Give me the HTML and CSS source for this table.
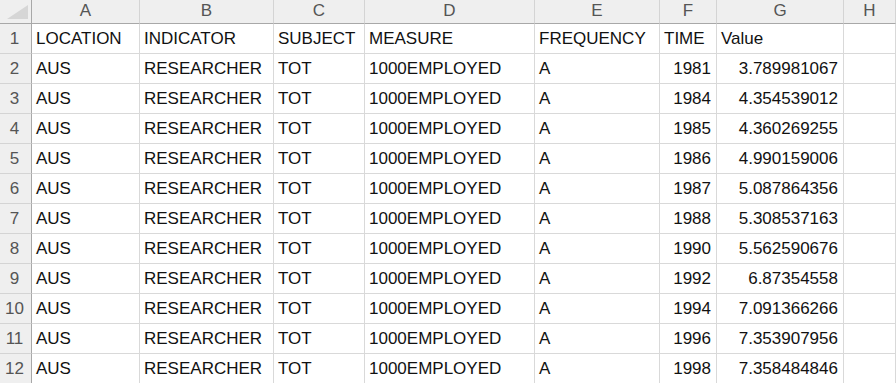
FILE: index.html
```html
<!DOCTYPE html>
<html>
<head>
<meta charset="utf-8">
<link rel="stylesheet" href="styles.css">
</head>
<body>
<div class="sheet">
  <div class="c hd corner"><div class="tri"></div></div>
  <div class="c hd col">A</div><div class="c hd col">B</div><div class="c hd col">C</div><div class="c hd col">D</div><div class="c hd col">E</div><div class="c hd col">F</div><div class="c hd col">G</div><div class="c hd col">H</div>

  <div class="c hd rn">1</div><div class="c">LOCATION</div><div class="c">INDICATOR</div><div class="c">SUBJECT</div><div class="c">MEASURE</div><div class="c">FREQUENCY</div><div class="c">TIME</div><div class="c">Value</div><div class="c"></div>
  <div class="c hd rn">2</div><div class="c">AUS</div><div class="c">RESEARCHER</div><div class="c">TOT</div><div class="c">1000EMPLOYED</div><div class="c">A</div><div class="c num">1981</div><div class="c num">3.789981067</div><div class="c"></div>
  <div class="c hd rn">3</div><div class="c">AUS</div><div class="c">RESEARCHER</div><div class="c">TOT</div><div class="c">1000EMPLOYED</div><div class="c">A</div><div class="c num">1984</div><div class="c num">4.354539012</div><div class="c"></div>
  <div class="c hd rn">4</div><div class="c">AUS</div><div class="c">RESEARCHER</div><div class="c">TOT</div><div class="c">1000EMPLOYED</div><div class="c">A</div><div class="c num">1985</div><div class="c num">4.360269255</div><div class="c"></div>
  <div class="c hd rn">5</div><div class="c">AUS</div><div class="c">RESEARCHER</div><div class="c">TOT</div><div class="c">1000EMPLOYED</div><div class="c">A</div><div class="c num">1986</div><div class="c num">4.990159006</div><div class="c"></div>
  <div class="c hd rn">6</div><div class="c">AUS</div><div class="c">RESEARCHER</div><div class="c">TOT</div><div class="c">1000EMPLOYED</div><div class="c">A</div><div class="c num">1987</div><div class="c num">5.087864356</div><div class="c"></div>
  <div class="c hd rn">7</div><div class="c">AUS</div><div class="c">RESEARCHER</div><div class="c">TOT</div><div class="c">1000EMPLOYED</div><div class="c">A</div><div class="c num">1988</div><div class="c num">5.308537163</div><div class="c"></div>
  <div class="c hd rn">8</div><div class="c">AUS</div><div class="c">RESEARCHER</div><div class="c">TOT</div><div class="c">1000EMPLOYED</div><div class="c">A</div><div class="c num">1990</div><div class="c num">5.562590676</div><div class="c"></div>
  <div class="c hd rn">9</div><div class="c">AUS</div><div class="c">RESEARCHER</div><div class="c">TOT</div><div class="c">1000EMPLOYED</div><div class="c">A</div><div class="c num">1992</div><div class="c num">6.87354558</div><div class="c"></div>
  <div class="c hd rn">10</div><div class="c">AUS</div><div class="c">RESEARCHER</div><div class="c">TOT</div><div class="c">1000EMPLOYED</div><div class="c">A</div><div class="c num">1994</div><div class="c num">7.091366266</div><div class="c"></div>
  <div class="c hd rn">11</div><div class="c">AUS</div><div class="c">RESEARCHER</div><div class="c">TOT</div><div class="c">1000EMPLOYED</div><div class="c">A</div><div class="c num">1996</div><div class="c num">7.353907956</div><div class="c"></div>
  <div class="c hd rn">12</div><div class="c">AUS</div><div class="c">RESEARCHER</div><div class="c">TOT</div><div class="c">1000EMPLOYED</div><div class="c">A</div><div class="c num">1998</div><div class="c num">7.358484846</div><div class="c"></div>
</div>
</body>
</html>
```

FILE: styles.css
```css
html, body {
  margin: 0;
  padding: 0;
  background: #ffffff;
  overflow: hidden;
}
.sheet {
  display: grid;
  grid-template-columns: 32px 108px 134px 91px 170px 125px 57px 127px 1fr;
  grid-template-rows: 24px repeat(12, 30px);
  width: 896px;
  font-family: "Liberation Sans", Arial, sans-serif;
  font-size: 17px;
  color: #111111;
}
.c {
  box-sizing: border-box;
  border-right: 1px solid #d9d9d9;
  border-bottom: 1px solid #d9d9d9;
  display: flex;
  align-items: flex-end;
  padding: 0 4px 4px 4px;
  line-height: 20px;
  white-space: nowrap;
  overflow: visible;
}
.num {
  justify-content: flex-end;
  padding-right: 5px;
}
.hd {
  background: #efefef;
  color: #555555;
}
.col {
  justify-content: center;
  align-items: center;
  padding: 0;
  border-bottom: 1px solid #a8a8a8;
  border-right: 1px solid #d4d4d4;
  font-size: 17px;
  padding-bottom: 2px;
}
.rn {
  justify-content: center;
  padding: 0 2px 4px 0;
  border-right: 1px solid #a8a8a8;
  border-bottom: 1px solid #d4d4d4;
  font-size: 17px;
}
.corner {
  justify-content: flex-end;
  align-items: flex-end;
  padding: 0 3px 4px 0;
  border-right: 1px solid #a8a8a8;
  border-bottom: 1px solid #a8a8a8;
}
.tri {
  width: 21px;
  height: 14px;
  background: #d6d6d6;
  clip-path: polygon(100% 0, 100% 100%, 0 100%);
}
```
